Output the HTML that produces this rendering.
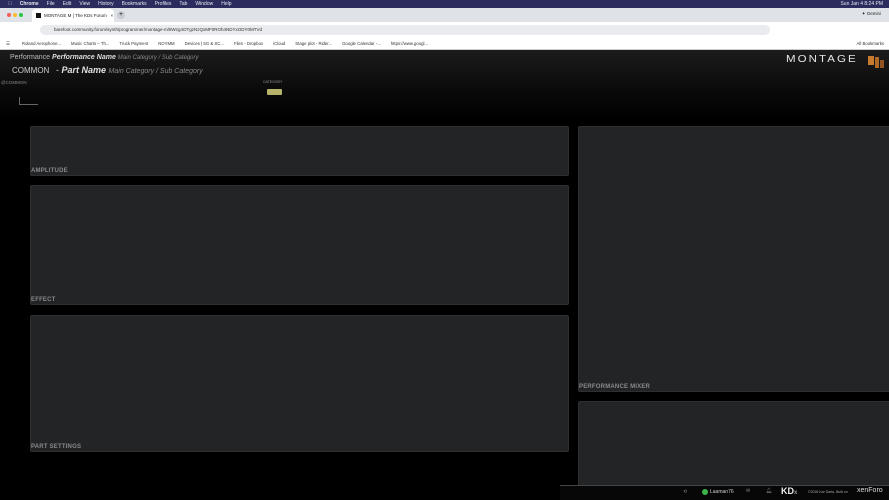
<!DOCTYPE html>
<html><head><style>
*{margin:0;padding:0;box-sizing:border-box}
html,body{width:889px;height:500px;overflow:hidden}
body{background:#000;font-family:"Liberation Sans",sans-serif;position:relative}
.abs{position:absolute}
.menubar{left:0;top:0;width:889px;height:8px;background:#2b2d5e;color:#e8e8f0;font-size:5px;line-height:8px}
.tabbar{left:0;top:8px;width:889px;height:14px;background:#dfe3e8}
.tab{left:32px;top:9px;width:82px;height:13px;background:#fff;border-radius:4px 4px 0 0;font-size:4.5px;line-height:13px;padding-left:12px;color:#222}
.addr{left:0;top:22px;width:889px;height:15px;background:#fff}
.url{left:40px;top:25px;width:730px;height:10px;background:#e9ebee;border-radius:5px;font-size:4.5px;line-height:10px;padding-left:14px;color:#333}
.bm{left:0;top:37px;width:889px;height:13px;background:#fff;border-bottom:1px solid #ccc;font-size:4.3px;line-height:13px;color:#333}
.content{left:0;top:50px;width:889px;height:450px;background:linear-gradient(#1c1c1c 0px,#0a0a0a 40px,#000 70px)}
.panel{position:absolute;background:#232426;border:1px solid #2e2f31;border-radius:2px}
.lbl{position:absolute;left:0;bottom:1px;font-size:6px;font-weight:bold;color:#8a8a8c;letter-spacing:.2px}
</style></head><body>
<div class="abs menubar"><span style="margin-left:8px">&#63743;</span><span style="margin-left:8px;font-weight:bold">Chrome</span><span style="margin-left:8px">File</span><span style="margin-left:8px">Edit</span><span style="margin-left:8px">View</span><span style="margin-left:8px">History</span><span style="margin-left:8px">Bookmarks</span><span style="margin-left:8px">Profiles</span><span style="margin-left:8px">Tab</span><span style="margin-left:8px">Window</span><span style="margin-left:8px">Help</span><span style="position:absolute;right:6px">Sun Jan 4 8:24 PM</span></div>
<div class="abs tabbar"><span class="abs" style="left:7px;top:5px;width:4px;height:4px;border-radius:50%;background:#f25f57"></span><span class="abs" style="left:13px;top:5px;width:4px;height:4px;border-radius:50%;background:#fbbc2e"></span><span class="abs" style="left:19px;top:5px;width:4px;height:4px;border-radius:50%;background:#29c840"></span><span class="abs" style="right:8px;top:3px;font-size:4.5px;color:#222">✦ Gemini</span></div>
<div class="abs tab"><span class="abs" style="left:4px;top:4px;width:5px;height:5px;background:#111"></span>MONTAGE M | The KDs Forum&nbsp;&nbsp;&nbsp;×</div>
<div class="abs" style="left:117px;top:11px;width:8px;height:8px;border-radius:50%;background:#c8ccd1;font-size:6px;text-align:center;line-height:8px">+</div>
<div class="abs addr"></div>
<div class="abs url">barefoot.community.forum/synth/programmer/montage-m/8Wzg4OTgzNzQxMF0ROh4NDYxODY0MTVd</div>
<div class="abs bm"><span style="margin-left:6px">☰</span><span style="margin-left:12px">Roland Aerophone...</span><span style="margin-left:10px">Music Charts – Th...</span><span style="margin-left:10px">Truck Payment</span><span style="margin-left:10px">NOYMM</span><span style="margin-left:10px">Devices | 5G &amp; SC...</span><span style="margin-left:10px">Files - Dropbox</span><span style="margin-left:10px">iCloud</span><span style="margin-left:10px">Stage plot - Rider...</span><span style="margin-left:10px">Google Calendar -...</span><span style="margin-left:10px">https://www.googl...</span><span style="position:absolute;right:5px">All Bookmarks</span></div>
<div class="abs" style="left:0;top:50px;width:120px;height:2px;background:#c77a2a"></div>
<div class="abs content"></div>
<div class="abs" style="left:10px;top:54px;color:#bbb;font-size:7px">Performance <b><i style="color:#ddd">Performance Name</i></b> <i style="font-size:6px;color:#888">Main Category / Sub Category</i></div>
<div class="abs" style="left:12px;top:66px;color:#ccc;font-size:8px">COMMON</div>
<div class="abs" style="left:56px;top:65px;color:#ccc;font-size:9px">- <b><i style="color:#e0e0e0">Part Name</i></b> <i style="font-size:7px;color:#888">Main Category / Sub Category</i></div>
<div class="abs" style="left:1px;top:80px;color:#888;font-size:4.5px">@COMMON</div>
<div class="abs" style="left:263px;top:80px;color:#999;font-size:3.5px">CATEGORY</div>
<div class="abs" style="left:267px;top:89px;width:15px;height:6px;background:#b6b46a;border-radius:1px"></div>
<div class="abs" style="left:19px;top:97px;width:1px;height:8px;background:#666"></div>
<div class="abs" style="left:19px;top:104px;width:19px;height:1px;background:#666"></div>
<div class="abs" style="left:786px;top:54px;color:#e6e6e6;font-size:10px;letter-spacing:1.8px;font-family:'Liberation Sans',sans-serif;transform:scaleX(1.15);transform-origin:left">MONTAGE</div>
<div class="abs" style="left:868px;top:56px;width:6px;height:9px;background:#c87b2e"></div>
<div class="abs" style="left:875px;top:57px;width:4px;height:11px;background:#b06a26"></div>
<div class="abs" style="left:880px;top:60px;width:4px;height:8px;background:#8f5420"></div>
<div class="panel" style="left:30px;top:126px;width:539px;height:50px"><div class="lbl">AMPLITUDE</div></div>
<div class="panel" style="left:30px;top:185px;width:539px;height:120px"><div class="lbl">EFFECT</div></div>
<div class="panel" style="left:30px;top:315px;width:539px;height:137px"><div class="lbl">PART SETTINGS</div></div>
<div class="panel" style="left:578px;top:126px;width:320px;height:266px"><div class="lbl">PERFORMANCE MIXER</div></div>
<div class="panel" style="left:578px;top:401px;width:320px;height:99px"></div>
<div class="abs" style="left:560px;top:485px;width:329px;height:15px;background:#070707;border-top:1px solid #444"></div>
<div class="abs" style="left:683px;top:489px;color:#888;font-size:5px">⟲</div>
<div class="abs" style="left:702px;top:489px;width:6px;height:6px;border-radius:50%;background:#3bb54a"></div>
<div class="abs" style="left:710px;top:489px;color:#ccc;font-size:5px">Laaman76</div>
<div class="abs" style="left:746px;top:488px;color:#888;font-size:5px">✉</div>
<div class="abs" style="left:766px;top:488px;color:#888;font-size:5px">🔔︎</div>
<div class="abs" style="left:781px;top:486px;color:#eee;font-size:9px;font-weight:bold">KD<span style="font-size:6px;color:#999">x</span></div>
<div class="abs" style="left:808px;top:490px;color:#aaa;font-size:3.5px">©2026 Kar Darts. Built on</div>
<div class="abs" style="left:857px;top:487px;color:#ddd;font-size:7px">xenForo</div>
</body></html>
